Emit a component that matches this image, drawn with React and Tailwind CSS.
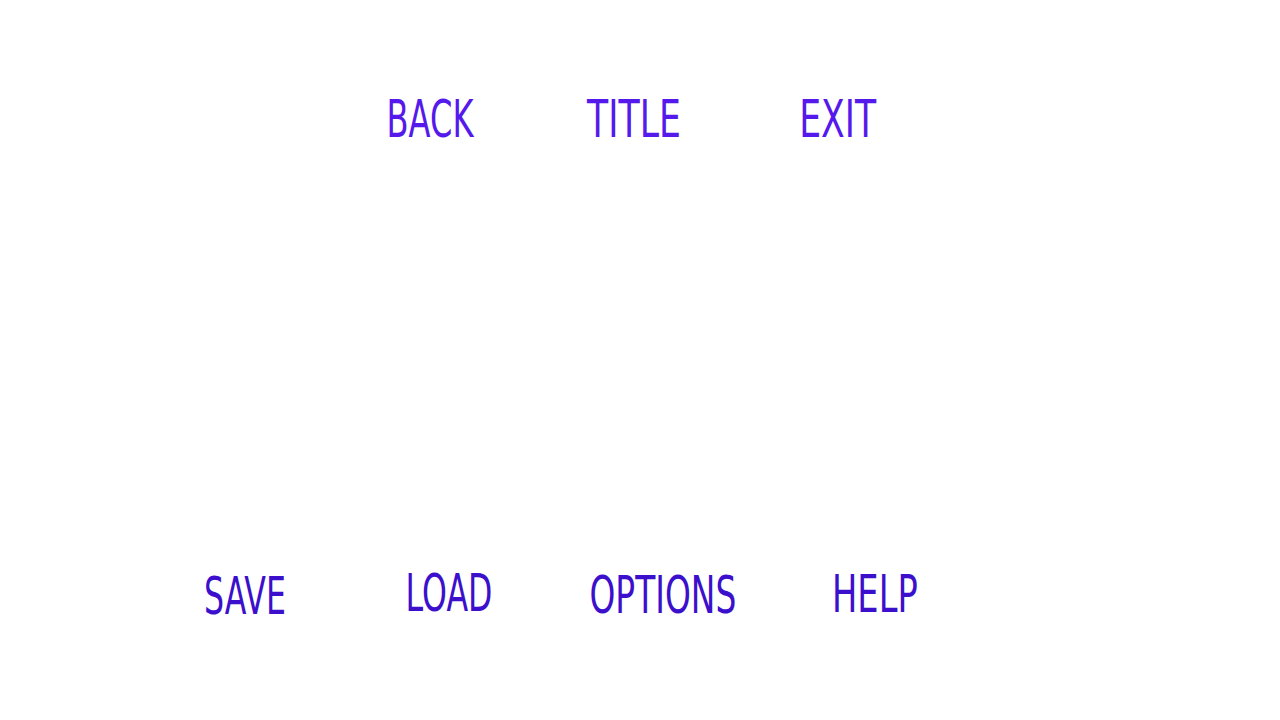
import React from 'react'

const font = { fontFamily: '"DejaVu Sans", sans-serif' }

function MenuItem({ label, box, lift, squeeze, tone }) {
    return (
        <div className={box + ' flex justify-center ' + lift}>
            <span className={'block text-[51px] leading-none whitespace-nowrap ' + squeeze + ' ' + tone}>{label}</span>
        </div>
    )
}

export default function App() {
    const top = [
        { label: 'BACK', box: 'w-[204px]', lift: 'mt-0', squeeze: 'scale-x-[0.63]' },
        { label: 'TITLE', box: 'w-[204px]', lift: 'mt-0', squeeze: 'scale-x-[0.68]' },
        { label: 'EXIT', box: 'w-[204px]', lift: 'mt-0', squeeze: 'scale-x-[0.68]' },
    ]
    const bottom = [
        { label: 'SAVE', box: 'w-[200px]', lift: 'mt-[3px]', squeeze: 'scale-x-[0.62]' },
        { label: 'LOAD', box: 'w-[208px]', lift: 'mt-0', squeeze: 'scale-x-[0.62]' },
        { label: 'OPTIONS', box: 'w-[219px]', lift: 'mt-[2px]', squeeze: 'scale-x-[0.645]' },
        { label: 'HELP', box: 'w-[205px]', lift: 'mt-[1px]', squeeze: 'scale-x-[0.66]' },
    ]
    return (
        <div className="w-[1280px] h-[720px] bg-white flex flex-col overflow-hidden" style={font}>
            <div className="flex pl-[328px] pt-[94px] items-start">
                {top.map((m) => (
                    <MenuItem key={m.label} {...m} tone="text-[#5519ec]" />
                ))}
            </div>
            <div className="flex pl-[145px] pt-[423px] items-start">
                {bottom.map((m) => (
                    <MenuItem key={m.label} {...m} tone="text-[#3b0fcc]" />
                ))}
            </div>
        </div>
    )
}
